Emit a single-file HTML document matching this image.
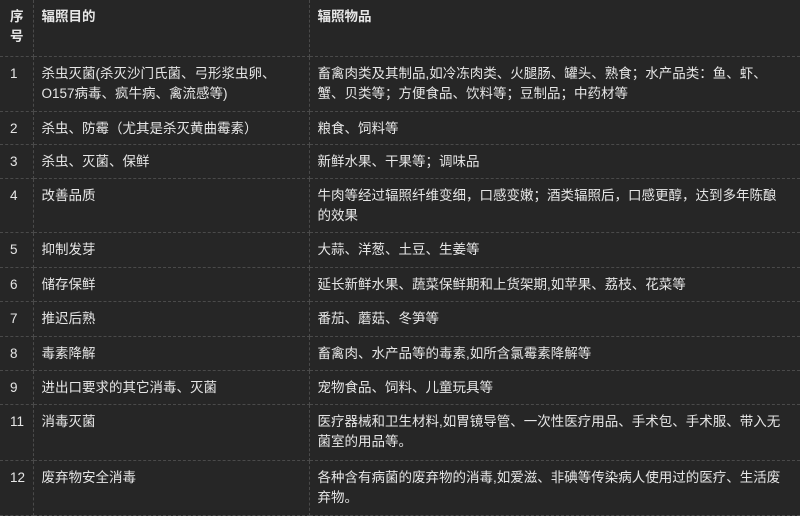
<!DOCTYPE html>
<html><head><meta charset="utf-8"><style>
html,body{margin:0;padding:0;background:#262626;}
body{width:800px;height:515px;overflow:hidden;font-family:"Liberation Sans","Noto Sans CJK SC","WenQuanYi Zen Hei",sans-serif;font-size:13.5px;color:#e6e6e6;}
table{border-collapse:collapse;width:800px;table-layout:fixed;}
td{border:1px dashed #4a4a4a;vertical-align:top;padding:7px 8px 0 8px;line-height:20px;box-sizing:border-box;overflow:hidden;white-space:nowrap;}
td:first-child{padding-left:10px;padding-right:4px;border-left:none;white-space:normal;}
td:last-child{border-right:none;}
tr:first-child td{border-top:none;font-weight:bold;}
</style></head><body>
<table>
<colgroup><col style="width:33px"><col style="width:276px"><col style="width:491px"></colgroup>
<tr style="height:56px"><td>序号</td><td>辐照目的</td><td>辐照物品</td></tr>
<tr style="height:55px"><td>1</td><td>杀虫灭菌(杀灭沙门氏菌、弓形浆虫卵、<br>O157病毒、疯牛病、禽流感等)</td><td>畜禽肉类及其制品,如冷冻肉类、火腿肠、罐头、熟食；水产品类：鱼、虾、<br>蟹、贝类等；方便食品、饮料等；豆制品；中药材等</td></tr>
<tr style="height:33px"><td>2</td><td>杀虫、防霉（尤其是杀灭黄曲霉素）</td><td>粮食、饲料等</td></tr>
<tr style="height:34px"><td>3</td><td>杀虫、灭菌、保鲜</td><td>新鲜水果、干果等；调味品</td></tr>
<tr style="height:54px"><td>4</td><td>改善品质</td><td>牛肉等经过辐照纤维变细，口感变嫩；酒类辐照后，口感更醇，达到多年陈酿<br>的效果</td></tr>
<tr style="height:35px"><td>5</td><td>抑制发芽</td><td>大蒜、洋葱、土豆、生姜等</td></tr>
<tr style="height:34px"><td>6</td><td>储存保鲜</td><td>延长新鲜水果、蔬菜保鲜期和上货架期,如苹果、荔枝、花菜等</td></tr>
<tr style="height:35px"><td>7</td><td>推迟后熟</td><td>番茄、蘑菇、冬笋等</td></tr>
<tr style="height:34px"><td>8</td><td>毒素降解</td><td>畜禽肉、水产品等的毒素,如所含氯霉素降解等</td></tr>
<tr style="height:34px"><td>9</td><td>进出口要求的其它消毒、灭菌</td><td>宠物食品、饲料、儿童玩具等</td></tr>
<tr style="height:56px"><td>11</td><td>消毒灭菌</td><td>医疗器械和卫生材料,如胃镜导管、一次性医疗用品、手术包、手术服、带入无<br>菌室的用品等。</td></tr>
<tr style="height:55px"><td>12</td><td>废弃物安全消毒</td><td>各种含有病菌的废弃物的消毒,如爱滋、非碘等传染病人使用过的医疗、生活废<br>弃物。</td></tr>
</table>
</body></html>
